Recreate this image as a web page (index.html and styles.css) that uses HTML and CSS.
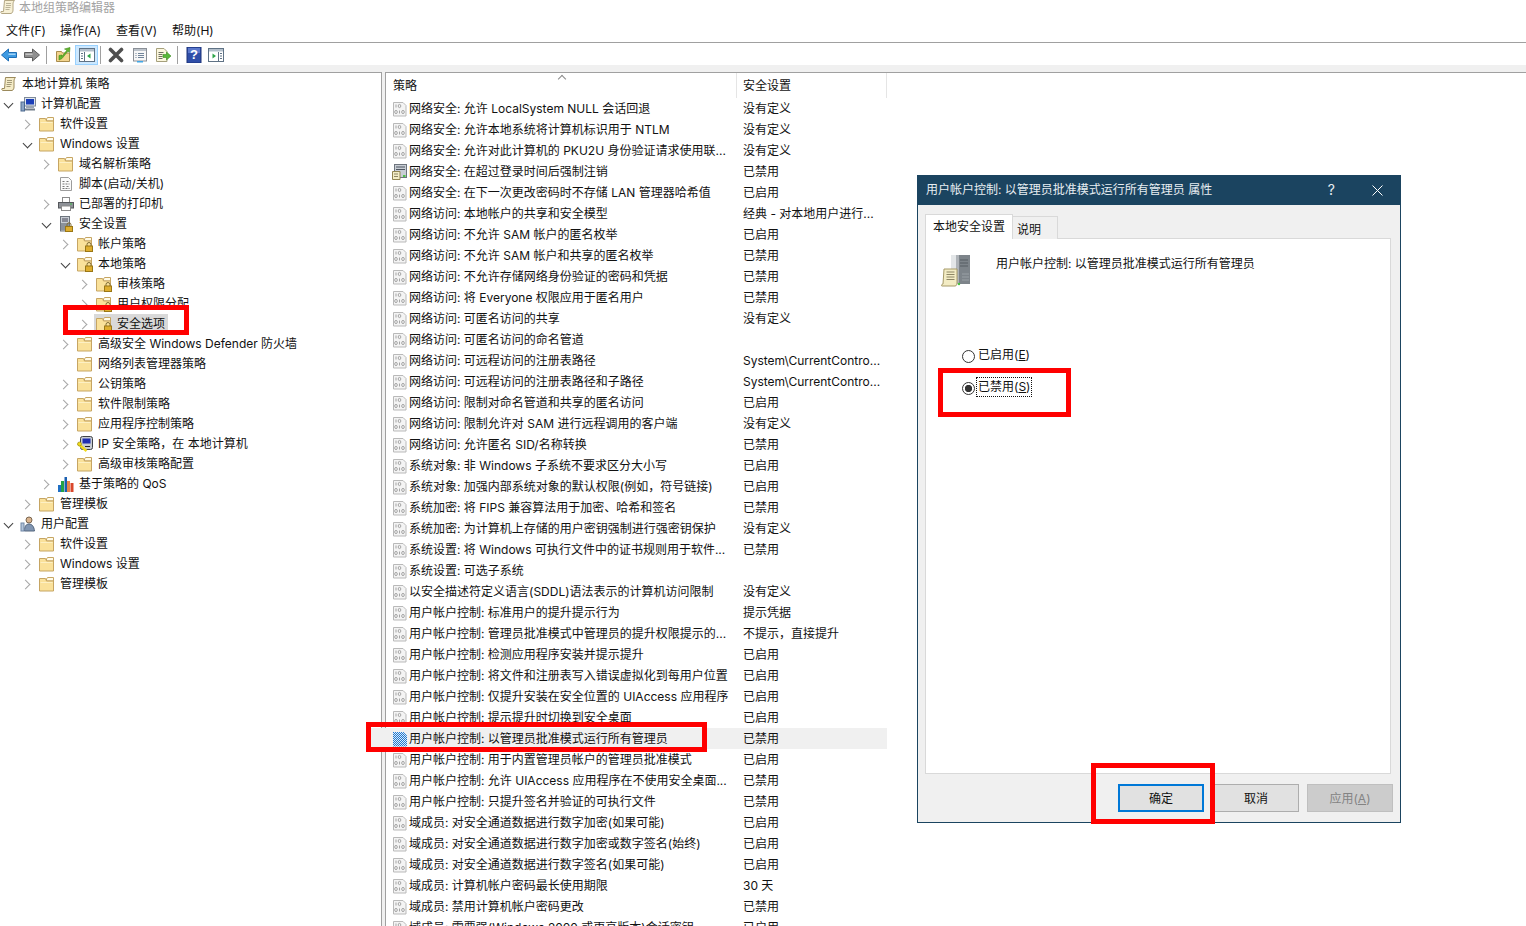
FILE: index.html
```html
<!DOCTYPE html>
<html lang="zh-CN">
<head>
<meta charset="utf-8">
<title>本地组策略编辑器</title>
<link rel="stylesheet" href="styles.css">
</head>
<body>
<svg class="defs" aria-hidden="true">
<defs>
<pattern id="dith" width="2" height="2" patternUnits="userSpaceOnUse"><rect width="2" height="2" fill="#dcebf9"/><rect width="1" height="1" fill="#1f78cf"/><rect x="1" y="1" width="1" height="1" fill="#1f78cf"/></pattern>
<symbol id="scroll" viewBox="0 0 16 16"><path d="M4.500 1.500h10c-1 1-1.500 2-1.500 3.500v6c0 1.500-.5 3-2 3.500H2c-1 0-1.500-1-1-2h2.500z" fill="#f5ecc8" stroke="#9b8a5c"/><path d="M6 4.500h5M6 6.500h5M5.500 8.500h5M5.500 10.500h4" stroke="#a39a78"/></symbol>
<symbol id="folder" viewBox="0 0 16 16"><path d="M7.500 5V3l1-1.500h6V5z" fill="#fffbe9" stroke="#c6a563"/><path d="M.5 2.500h6l1 2.500h7v10H.5z" fill="#fae19a" stroke="#c6a563"/><path d="M1.500 6h12v1h-12z" fill="#fdf0c4"/></symbol>
<symbol id="lock" viewBox="0 0 16 16"><path d="M7.500 5V3l1-1.500h6V5z" fill="#fffbe9" stroke="#c6a563"/><path d="M.5 2.500h6l1 2.500h7v10H.5z" fill="#fae19a" stroke="#c6a563"/><path d="M10 10V8.500a2 2 0 0 1 4 0V10" fill="none" stroke="#7d6a35"/><rect x="8.500" y="10" width="7" height="5.500" fill="#dfae2e" stroke="#9a7716"/></symbol>
<symbol id="comp" viewBox="0 0 16 16"><rect x="4.500" y="1.500" width="11" height="8.500" fill="#dfe6ee" stroke="#7f8a99"/><rect x="6" y="3" width="8" height="5.500" fill="#1c3fb8"/><rect x="6" y="10" width="8" height="2" fill="#9aa5b3"/><path d="M4 13.500h11" stroke="#6f7a88" stroke-width="2"/><rect x="1" y="6" width="3.500" height="9" fill="#8ca4c4" stroke="#4c6a90"/></symbol>
<symbol id="user" viewBox="0 0 16 16"><circle cx="9" cy="4" r="3" fill="#d9b48f" stroke="#7a6650"/><path d="M4.500 15c0-4.500 1.500-7 4.500-7s5 2.500 5.500 7z" fill="#8095b2" stroke="#55677f"/><rect x="1" y="7" width="3" height="8" fill="#b2c4da" stroke="#6f86a5"/></symbol>
<symbol id="script" viewBox="0 0 16 16"><path d="M2.500 1.500h8l3 3v10h-11z" fill="#fafafa" stroke="#9c9c9c"/><path d="M4.500 5.500h2M8.500 5.500h3M4.500 8h7M4.500 10.500h2M8.500 10.500h3M4.500 12.500h7" stroke="#777" stroke-dasharray="2 1"/></symbol>
<symbol id="printer" viewBox="0 0 16 16"><rect x="4.500" y="1.500" width="7" height="5" fill="#fff" stroke="#8a8a8a"/><rect x=".5" y="6.500" width="15" height="5.500" fill="#8d9197" stroke="#55585c"/><rect x="3.500" y="10" width="9" height="4.500" fill="#fff" stroke="#8a8a8a"/><path d="M12 8h2" stroke="#3ec24a"/></symbol>
<symbol id="srvlock" viewBox="0 0 16 16"><rect x="2.500" y=".5" width="9" height="14.500" fill="#c9ced5" stroke="#6d747d"/><path d="M4 3h6M4 5h6" stroke="#445"/><rect x="3" y="7" width="8" height="7" fill="#8b929b"/><path d="M9 10.500V8.800a2 2 0 0 1 4 0v1.700" fill="none" stroke="#7d6a35"/><rect x="7.500" y="10.500" width="7" height="5" fill="#dfae2e" stroke="#9a7716"/></symbol>
<symbol id="ipsec" viewBox="0 0 16 16"><rect x="3.500" y=".5" width="12" height="13" rx="2" fill="#c7ccd2" stroke="#3f4347"/><rect x="5.500" y="2.500" width="8" height="5" fill="#1f2fb0"/><path d="M8 10.500h5" stroke="#222"/><path d="M1 7.500l8.500 7.500" stroke="#f0da1c" stroke-width="2.400"/><circle cx="2.500" cy="8" r="2" fill="#f0da1c" stroke="#8c8010" stroke-width=".6"/></symbol>
<symbol id="qos" viewBox="0 0 16 16"><rect x="0" y="9" width="3" height="7" fill="#1f6fc4"/><rect x="3" y="5" width="3" height="11" fill="#25a244"/><rect x="6.500" y="1" width="2.500" height="15" fill="#1b5fb0"/><rect x="9" y="5" width="3" height="11" fill="#e8834a"/><rect x="12.500" y="7" width="3" height="9" fill="#d9472c"/></symbol>
<symbol id="p" viewBox="0 0 16 16"><path d="M1.500 1.500h9.500l3 3v10.500h-12.500z" fill="#f4f4f4" stroke="#b9b9b9"/><g fill="none" stroke="#a5a5a5"><path d="M4 3.500v3"/><ellipse cx="7.500" cy="5" rx="1.300" ry="1.600"/><ellipse cx="4" cy="11" rx="1.300" ry="1.600"/><path d="M7.500 9.500v3"/><ellipse cx="11" cy="11" rx="1.300" ry="1.600"/></g></symbol>
<symbol id="psel" viewBox="0 0 16 16"><path d="M1 1h10.500l3.500 3.500v11H1z" fill="url(#dith)"/></symbol>
<symbol id="psrv" viewBox="0 0 16 16"><rect x="2.500" y=".5" width="12" height="13" fill="#c9ced5" stroke="#6d747d"/><path d="M4 3h9M4 5.500h9" stroke="#4d5560"/><path d="M.5 7.500h7.500v8H.5z" fill="#f4edc6" stroke="#918552"/><path d="M2 10h4M2 12.500h4" stroke="#8d8664"/><rect x="11" y="11" width="2.500" height="2" fill="#4fc14a"/></symbol>
<symbol id="back" viewBox="0 0 16 16"><path d="M.5 8L7.500 2v3.500h8v5h-8V14z" fill="#3d9ae2" stroke="#1f6eb5" stroke-linejoin="round"/><path d="M7.500 6.500h7v1.500h-7z" fill="#9fd2f7"/></symbol>
<symbol id="fwd" viewBox="0 0 16 16"><path d="M15.500 8L8.500 2v3.500h-8v5h8V14z" fill="#8f8f8f" stroke="#5e5e5e" stroke-linejoin="round"/><path d="M1.500 6.500h7v1.500h-7z" fill="#c4c4c4"/></symbol>
<symbol id="up" viewBox="0 0 16 16"><path d="M1.500 4.500h5l1 1.500h7v8.500h-13z" fill="#f3d48e" stroke="#a98c4d"/><path d="M4 13V8.500l3-.5V9.500L12 3 9.500 2 15 .5l-.5 5-1.500-1.500-6 7.500z" fill="#63b82e" stroke="#3f8a1a" stroke-width=".6"/></symbol>
<symbol id="pane" viewBox="0 0 16 16"><rect x=".5" y="1.500" width="15" height="13" fill="#fff" stroke="#5f7285"/><rect x="1" y="2" width="14" height="2.500" fill="#b3bfcb"/><path d="M5.500 5v9" stroke="#5f7285"/><path d="M2 6.500h2M2 9h2M2 11.500h2" stroke="#5f7285"/><path d="M11.500 6.500v5L8 9z" fill="#2ea54a"/></symbol>
<symbol id="panes" viewBox="0 0 16 16"><rect x=".5" y="1.500" width="15" height="13" fill="#fff" stroke="#5f7285"/><rect x="1" y="2" width="14" height="2.500" fill="#b3bfcb"/><path d="M10.500 5v9" stroke="#5f7285"/><path d="M12 6.500h2M12 9h2M12 11.500h2" stroke="#5f7285"/><path d="M4.500 6.500v5L8 9z" fill="#2ea54a"/></symbol>
<symbol id="x" viewBox="0 0 16 16"><path d="M2.500 2.500l11 11M13.500 2.500l-11 11" stroke="#4f4f4f" stroke-width="3.600" stroke-linecap="round"/></symbol>
<symbol id="props" viewBox="0 0 16 16"><rect x="1.500" y="1.500" width="13" height="12.500" fill="#f7f7f7" stroke="#8a8f96"/><rect x="2" y="2" width="12" height="2" fill="#bcc3cb"/><path d="M3.500 6.500h1M6 6.500h6M3.500 8.500h1M6 8.500h6M3.500 10.500h1M6 10.500h6" stroke="#70849a"/><rect x="5" y="14" width="6" height="1.500" fill="#41a7e6"/></symbol>
<symbol id="export" viewBox="0 0 16 16"><path d="M1.500 1.500h7.500l3 3v10H1.500z" fill="#fbf7de" stroke="#a6a07c"/><path d="M3.500 5.500h5M3.500 7.500h4M3.500 9.500h4M3.500 11.500h4" stroke="#6d6d5f"/><path d="M8 7.500h3.500V5L16 9l-4.500 4v-2.500H8z" fill="#58b83a" stroke="#3d8d24" stroke-width=".6"/></symbol>
<symbol id="help" viewBox="0 0 16 16"><rect x="1" y="0" width="14" height="16" fill="#2f4ea8" stroke="#1d3378"/><rect x="2" y="1" width="12" height="5" fill="#5b78cc"/></symbol>
<symbol id="bigsrv" viewBox="0 0 32 34"><path d="M10 1h19v29H10z" fill="#aeb3b8"/><path d="M10 1h5v29h-5z" fill="#e3e6e8"/><path d="M18 1h11v29H18z" fill="#7d848a"/><path d="M19 6h8M19 9h8M19 12h8" stroke="#565c62"/><path d="M21 20h7M21 23h7M21 26h7" stroke="#9aa0a5"/><circle cx="18" cy="30" r="1.200" fill="#46c13f"/><path d="M3 15h13v14c0 1.500-.5 3-2 3H1c-1 0-1-1.500 1-2z" fill="#f3ecc4" stroke="#a69a68"/><path d="M5.500 18h8M5.500 20.500h8M5.500 23h8M5.500 25.500h8" stroke="#8d8664"/></symbol>
</defs>
</svg>

<div class="app">
  <div class="titlebar"><svg class="title-ic"><use href="#scroll"/></svg><span>本地组策略编辑器</span></div>
  <nav class="menu"><span>文件(F)</span><span>操作(A)</span><span>查看(V)</span><span>帮助(H)</span></nav>
  <div class="toolbar">
    <div class="tg g1"><svg class="ic"><use href="#back"/></svg><svg class="ic"><use href="#fwd"/></svg></div>
    <i class="sep s1"></i>
    <div class="tg g2"><svg class="ic"><use href="#up"/></svg><span class="hot"><svg class="ic"><use href="#pane"/></svg></span></div>
    <i class="sep s2"></i>
    <div class="tg g3"><svg class="ic"><use href="#x"/></svg><svg class="ic"><use href="#props"/></svg><svg class="ic"><use href="#export"/></svg></div>
    <i class="sep s1"></i>
    <div class="tg g4"><span class="helpbtn"><svg class="ic"><use href="#help"/></svg><b>?</b></span><svg class="ic"><use href="#panes"/></svg></div>
  </div>
  <div class="band"></div>
  <div class="panes">
    <aside class="tree">
      <div class="node root"><svg class="ic"><use href="#scroll"/></svg><span>本地计算机 策略</span></div>
      <div class="node l0"><i class="chev open"></i><svg class="ic"><use href="#comp"/></svg><span>计算机配置</span></div>
      <div class="node l1"><i class="chev"></i><svg class="ic"><use href="#folder"/></svg><span>软件设置</span></div>
      <div class="node l1"><i class="chev open"></i><svg class="ic"><use href="#folder"/></svg><span>Windows 设置</span></div>
      <div class="node l2"><i class="chev"></i><svg class="ic"><use href="#folder"/></svg><span>域名解析策略</span></div>
      <div class="node l2"><i class="chev none"></i><svg class="ic"><use href="#script"/></svg><span>脚本(启动/关机)</span></div>
      <div class="node l2"><i class="chev"></i><svg class="ic"><use href="#printer"/></svg><span>已部署的打印机</span></div>
      <div class="node l2"><i class="chev open"></i><svg class="ic"><use href="#srvlock"/></svg><span>安全设置</span></div>
      <div class="node l3"><i class="chev"></i><svg class="ic"><use href="#lock"/></svg><span>帐户策略</span></div>
      <div class="node l3"><i class="chev open"></i><svg class="ic"><use href="#lock"/></svg><span>本地策略</span></div>
      <div class="node l4"><i class="chev"></i><svg class="ic"><use href="#lock"/></svg><span>审核策略</span></div>
      <div class="node l4"><i class="chev"></i><svg class="ic"><use href="#lock"/></svg><span>用户权限分配</span></div>
      <div class="node l4"><i class="chev"></i><span class="cur"><svg class="ic"><use href="#lock"/></svg><span>安全选项</span></span></div>
      <div class="node l3"><i class="chev"></i><svg class="ic"><use href="#folder"/></svg><span>高级安全 Windows Defender 防火墙</span></div>
      <div class="node l3"><i class="chev none"></i><svg class="ic"><use href="#folder"/></svg><span>网络列表管理器策略</span></div>
      <div class="node l3"><i class="chev"></i><svg class="ic"><use href="#folder"/></svg><span>公钥策略</span></div>
      <div class="node l3"><i class="chev"></i><svg class="ic"><use href="#folder"/></svg><span>软件限制策略</span></div>
      <div class="node l3"><i class="chev"></i><svg class="ic"><use href="#folder"/></svg><span>应用程序控制策略</span></div>
      <div class="node l3"><i class="chev"></i><svg class="ic"><use href="#ipsec"/></svg><span>IP 安全策略，在 本地计算机</span></div>
      <div class="node l3"><i class="chev"></i><svg class="ic"><use href="#folder"/></svg><span>高级审核策略配置</span></div>
      <div class="node l2"><i class="chev"></i><svg class="ic"><use href="#qos"/></svg><span>基于策略的 QoS</span></div>
      <div class="node l1"><i class="chev"></i><svg class="ic"><use href="#folder"/></svg><span>管理模板</span></div>
      <div class="node l0"><i class="chev open"></i><svg class="ic"><use href="#user"/></svg><span>用户配置</span></div>
      <div class="node l1"><i class="chev"></i><svg class="ic"><use href="#folder"/></svg><span>软件设置</span></div>
      <div class="node l1"><i class="chev"></i><svg class="ic"><use href="#folder"/></svg><span>Windows 设置</span></div>
      <div class="node l1"><i class="chev"></i><svg class="ic"><use href="#folder"/></svg><span>管理模板</span></div>
    </aside>
    <div class="split"></div>
    <main class="list">
      <div class="head"><span class="hname">策略<i class="sort"></i></span><span class="hval">安全设置</span></div>
      <div class="row"><span class="name"><svg class="ic"><use href="#p"/></svg><span>网络安全: 允许 LocalSystem NULL 会话回退</span></span><span class="val">没有定义</span></div>
      <div class="row"><span class="name"><svg class="ic"><use href="#p"/></svg><span>网络安全: 允许本地系统将计算机标识用于 NTLM</span></span><span class="val">没有定义</span></div>
      <div class="row"><span class="name"><svg class="ic"><use href="#p"/></svg><span>网络安全: 允许对此计算机的 PKU2U 身份验证请求使用联...</span></span><span class="val">没有定义</span></div>
      <div class="row"><span class="name"><svg class="ic"><use href="#psrv"/></svg><span>网络安全: 在超过登录时间后强制注销</span></span><span class="val">已禁用</span></div>
      <div class="row"><span class="name"><svg class="ic"><use href="#p"/></svg><span>网络安全: 在下一次更改密码时不存储 LAN 管理器哈希值</span></span><span class="val">已启用</span></div>
      <div class="row"><span class="name"><svg class="ic"><use href="#p"/></svg><span>网络访问: 本地帐户的共享和安全模型</span></span><span class="val">经典 - 对本地用户进行...</span></div>
      <div class="row"><span class="name"><svg class="ic"><use href="#p"/></svg><span>网络访问: 不允许 SAM 帐户的匿名枚举</span></span><span class="val">已启用</span></div>
      <div class="row"><span class="name"><svg class="ic"><use href="#p"/></svg><span>网络访问: 不允许 SAM 帐户和共享的匿名枚举</span></span><span class="val">已禁用</span></div>
      <div class="row"><span class="name"><svg class="ic"><use href="#p"/></svg><span>网络访问: 不允许存储网络身份验证的密码和凭据</span></span><span class="val">已禁用</span></div>
      <div class="row"><span class="name"><svg class="ic"><use href="#p"/></svg><span>网络访问: 将 Everyone 权限应用于匿名用户</span></span><span class="val">已禁用</span></div>
      <div class="row"><span class="name"><svg class="ic"><use href="#p"/></svg><span>网络访问: 可匿名访问的共享</span></span><span class="val">没有定义</span></div>
      <div class="row"><span class="name"><svg class="ic"><use href="#p"/></svg><span>网络访问: 可匿名访问的命名管道</span></span><span class="val"></span></div>
      <div class="row"><span class="name"><svg class="ic"><use href="#p"/></svg><span>网络访问: 可远程访问的注册表路径</span></span><span class="val">System\CurrentContro...</span></div>
      <div class="row"><span class="name"><svg class="ic"><use href="#p"/></svg><span>网络访问: 可远程访问的注册表路径和子路径</span></span><span class="val">System\CurrentContro...</span></div>
      <div class="row"><span class="name"><svg class="ic"><use href="#p"/></svg><span>网络访问: 限制对命名管道和共享的匿名访问</span></span><span class="val">已启用</span></div>
      <div class="row"><span class="name"><svg class="ic"><use href="#p"/></svg><span>网络访问: 限制允许对 SAM 进行远程调用的客户端</span></span><span class="val">没有定义</span></div>
      <div class="row"><span class="name"><svg class="ic"><use href="#p"/></svg><span>网络访问: 允许匿名 SID/名称转换</span></span><span class="val">已禁用</span></div>
      <div class="row"><span class="name"><svg class="ic"><use href="#p"/></svg><span>系统对象: 非 Windows 子系统不要求区分大小写</span></span><span class="val">已启用</span></div>
      <div class="row"><span class="name"><svg class="ic"><use href="#p"/></svg><span>系统对象: 加强内部系统对象的默认权限(例如，符号链接)</span></span><span class="val">已启用</span></div>
      <div class="row"><span class="name"><svg class="ic"><use href="#p"/></svg><span>系统加密: 将 FIPS 兼容算法用于加密、哈希和签名</span></span><span class="val">已禁用</span></div>
      <div class="row"><span class="name"><svg class="ic"><use href="#p"/></svg><span>系统加密: 为计算机上存储的用户密钥强制进行强密钥保护</span></span><span class="val">没有定义</span></div>
      <div class="row"><span class="name"><svg class="ic"><use href="#p"/></svg><span>系统设置: 将 Windows 可执行文件中的证书规则用于软件...</span></span><span class="val">已禁用</span></div>
      <div class="row"><span class="name"><svg class="ic"><use href="#p"/></svg><span>系统设置: 可选子系统</span></span><span class="val"></span></div>
      <div class="row"><span class="name"><svg class="ic"><use href="#p"/></svg><span>以安全描述符定义语言(SDDL)语法表示的计算机访问限制</span></span><span class="val">没有定义</span></div>
      <div class="row"><span class="name"><svg class="ic"><use href="#p"/></svg><span>用户帐户控制: 标准用户的提升提示行为</span></span><span class="val">提示凭据</span></div>
      <div class="row"><span class="name"><svg class="ic"><use href="#p"/></svg><span>用户帐户控制: 管理员批准模式中管理员的提升权限提示的...</span></span><span class="val">不提示，直接提升</span></div>
      <div class="row"><span class="name"><svg class="ic"><use href="#p"/></svg><span>用户帐户控制: 检测应用程序安装并提示提升</span></span><span class="val">已启用</span></div>
      <div class="row"><span class="name"><svg class="ic"><use href="#p"/></svg><span>用户帐户控制: 将文件和注册表写入错误虚拟化到每用户位置</span></span><span class="val">已启用</span></div>
      <div class="row"><span class="name"><svg class="ic"><use href="#p"/></svg><span>用户帐户控制: 仅提升安装在安全位置的 UIAccess 应用程序</span></span><span class="val">已启用</span></div>
      <div class="row"><span class="name"><svg class="ic"><use href="#p"/></svg><span>用户帐户控制: 提示提升时切换到安全桌面</span></span><span class="val">已启用</span></div>
      <div class="row selected"><span class="name"><svg class="ic"><use href="#psel"/></svg><span>用户帐户控制: 以管理员批准模式运行所有管理员</span></span><span class="val">已禁用</span></div>
      <div class="row"><span class="name"><svg class="ic"><use href="#p"/></svg><span>用户帐户控制: 用于内置管理员帐户的管理员批准模式</span></span><span class="val">已启用</span></div>
      <div class="row"><span class="name"><svg class="ic"><use href="#p"/></svg><span>用户帐户控制: 允许 UIAccess 应用程序在不使用安全桌面...</span></span><span class="val">已禁用</span></div>
      <div class="row"><span class="name"><svg class="ic"><use href="#p"/></svg><span>用户帐户控制: 只提升签名并验证的可执行文件</span></span><span class="val">已禁用</span></div>
      <div class="row"><span class="name"><svg class="ic"><use href="#p"/></svg><span>域成员: 对安全通道数据进行数字加密(如果可能)</span></span><span class="val">已启用</span></div>
      <div class="row"><span class="name"><svg class="ic"><use href="#p"/></svg><span>域成员: 对安全通道数据进行数字加密或数字签名(始终)</span></span><span class="val">已启用</span></div>
      <div class="row"><span class="name"><svg class="ic"><use href="#p"/></svg><span>域成员: 对安全通道数据进行数字签名(如果可能)</span></span><span class="val">已启用</span></div>
      <div class="row"><span class="name"><svg class="ic"><use href="#p"/></svg><span>域成员: 计算机帐户密码最长使用期限</span></span><span class="val">30 天</span></div>
      <div class="row"><span class="name"><svg class="ic"><use href="#p"/></svg><span>域成员: 禁用计算机帐户密码更改</span></span><span class="val">已禁用</span></div>
      <div class="row"><span class="name"><svg class="ic"><use href="#p"/></svg><span>域成员: 需要强(Windows 2000 或更高版本)会话密钥</span></span><span class="val">已启用</span></div>
    </main>
  </div>
</div>

<section class="dialog">
  <header class="dlg-title"><span class="dlg-name">用户帐户控制: 以管理员批准模式运行所有管理员 属性</span><span class="dlg-help">?</span><svg class="dlg-close" viewBox="0 0 11 11"><path d="M.5.500l10 10M10.500.500l-10 10"/></svg></header>
  <div class="dlg-body">
    <div class="tabs"><span class="tab active">本地安全设置</span><span class="tab">说明</span></div>
    <div class="panel">
      <div class="policy-head"><svg class="bigicon"><use href="#bigsrv"/></svg><span>用户帐户控制: 以管理员批准模式运行所有管理员</span></div>
      <div class="radios">
        <div class="radio"><i class="dot"></i><span>已启用(<u>E</u>)</span></div>
        <div class="radio checked"><i class="dot"></i><span class="focus">已禁用(<u>S</u>)</span></div>
      </div>
    </div>
    <div class="buttons"><span class="btn primary">确定</span><span class="btn">取消</span><span class="btn off">应用(<u>A</u>)</span></div>
  </div>
</section>

<div class="mark m-tree"></div>
<div class="mark m-row"></div>
<div class="mark m-radio"></div>
<div class="mark m-ok"></div>
</body>
</html>
```
FILE: styles.css
```css
* { box-sizing: border-box; }
html, body { margin: 0; height: 100%; }
body {
  position: relative;
  width: 1526px;
  height: 926px;
  overflow: hidden;
  background: #fff;
  color: #111;
  font: 12px/20px Inter, "Noto Sans CJK SC", sans-serif;
}
.defs { position: absolute; width: 0; height: 0; }
.ic { width: 16px; height: 16px; flex: none; display: block; }

.app { display: flex; flex-direction: column; height: 926px; }

.titlebar { height: 21px; display: flex; color: #a3a3a3; line-height: 15px; padding-left: 19px; overflow: hidden; }
.title-ic { width: 16px; height: 16px; margin: -1px 3px 0 -19px; flex: none; opacity: .75; }

.menu { height: 22px; display: flex; border-bottom: 1px solid #a0a0a0; padding-left: 6px; line-height: 20px; }
.menu span { width: 56px; }
.menu span:first-child { width: 54px; }

.toolbar { height: 22px; padding-top: 1px; display: flex; align-items: center; background: #fff; flex: none; }
.tg { display: flex; align-items: center; }
.g1 { padding-left: 1px; gap: 7px; }
.g2 { gap: 4px; }
.g3 { gap: 7.5px; }
.g4 { gap: 6px; }
.sep { width: 1px; height: 18px; background: #a0a0a0; flex: none; }
.s1 { margin: 0 8px 0 6px; }
.s2 { margin: 0 7px 0 2px; }
.hot { width: 23px; height: 20px; display: flex; align-items: center; justify-content: center; background: #cce8ff; border: 1px solid #99d1ff; }
.helpbtn { position: relative; width: 16px; height: 16px; display: block; }
.helpbtn b { position: absolute; inset: 0; text-align: center; color: #fff; font: bold 13px/16px "Liberation Sans", sans-serif; }

.band { height: 7px; background: #f0f0f0; flex: none; }

.panes { flex: 1; display: flex; min-height: 0; background: #f0f0f0; }
.tree { width: 382px; flex: none; background: #fff; padding-top: 1px; border-top: 1px solid #a0a0a0; border-right: 1px solid #a0a0a0; }
.split { width: 3px; flex: none; }
.list { flex: 1; min-width: 0; background: #fff; border-top: 1px solid #a0a0a0; border-left: 1px solid #a0a0a0; }

.node { height: 20px; display: flex; align-items: center; padding-left: 1px; white-space: nowrap; }
.node > svg { margin-right: 5px; }
.root { padding-left: 1px; }
.l1 { padding-left: 20px; }
.l2 { padding-left: 39px; }
.l3 { padding-left: 58px; }
.l4 { padding-left: 77px; }
.chev { width: 19px; height: 20px; flex: none; position: relative; }
.chev::before {
  content: ""; position: absolute; left: 2px; top: 7px;
  width: 6px; height: 6px;
  border-top: 1.6px solid #a6a6a6; border-right: 1.6px solid #a6a6a6;
  transform: rotate(45deg);
}
.chev.open::before { left: 4px; top: 5.500px; border-color: #404040; transform: rotate(135deg); }
.chev.none::before { display: none; }
.cur { display: flex; align-items: center; gap: 5px; background: #d9d9d9; height: 20px; padding-right: 3px; margin-left: -2px; padding-left: 2px; }

.head { display: grid; grid-template-columns: 350px 151px; height: 25px; line-height: 25px; }
.hname { padding-left: 7px; position: relative; }
.hval { padding-left: 6px; border-left: 1px solid #e5e5e5; border-right: 1px solid #e5e5e5; }
.sort { position: absolute; left: 173px; top: 3px; width: 6px; height: 6px; border-top: 1px solid #8a8a8a; border-left: 1px solid #8a8a8a; transform: rotate(45deg); }

.row { display: grid; grid-template-columns: 350px 150px; height: 21px; line-height: 21px; white-space: nowrap; }
.name { display: flex; align-items: center; gap: 1px; padding-left: 6px; overflow: hidden; }
.val { padding-left: 7px; overflow: hidden; }
.selected { position: relative; z-index: 1; margin-left: -15px; width: 516px; grid-template-columns: 365px 151px; background: #f0f0f0; }
.selected .name { padding-left: 21px; }

.dialog {
  position: absolute; left: 917px; top: 175px; width: 484px; height: 648px;
  display: flex; flex-direction: column;
  background: #f0f0f0; border: 1px solid #1b4460;
}
.dlg-title { height: 29px; flex: none; display: flex; align-items: center; background: #1b4460; color: #e8eef2; padding: 0 0 2px 8px; }
.dlg-name { flex: 1; }
.dlg-help { margin-right: 37px; font-size: 14px; }
.dlg-close { width: 11px; height: 11px; margin: 2px 17px 0 0; stroke: #fff; fill: none; }
.dlg-body { flex: 1; display: flex; flex-direction: column; padding: 9px 9px 10px 7px; min-height: 0; }
.tabs { display: flex; align-items: flex-end; height: 25px; flex: none; position: relative; z-index: 1; margin-bottom: -1px; }
.tab { width: 45px; height: 23px; line-height: 25px; padding-left: 4px; background: #f0f0f0; border: 1px solid #d9d9d9; border-left: 0; border-bottom: 0; }
.tab.active { width: 88px; height: 25px; line-height: 23px; padding-left: 7px; background: #fff; border-left: 1px solid #d9d9d9; }
.panel { flex: 1; min-height: 0; background: #fff; border: 1px solid #d9d9d9; padding: 15px 0 0 15px; }
.policy-head { display: flex; align-items: flex-start; gap: 23px; height: 34px; }
.bigicon { width: 32px; height: 34px; flex: none; }
.radios { margin: 58px 0 0 21px; display: flex; flex-direction: column; gap: 12px; }
.radio { height: 20px; display: flex; align-items: center; gap: 3px; }
.dot { width: 13px; height: 13px; flex: none; border: 1px solid #333; border-radius: 50%; background: #fff; margin-top: 1px; }
.checked .dot { background: radial-gradient(circle, #333 0 3.400px, #fff 3.900px); }
.focus { outline: 1px dotted #111; line-height: 18px; padding: 0 1px; margin-left: -1px; margin-top: -2px; }
.radio > span:not(.focus) { margin-top: -2px; }
.buttons { display: flex; justify-content: flex-end; gap: 8px; height: 28px; margin-top: 10px; flex: none; margin-right: -2px; }
.btn { width: 86px; height: 28px; line-height: 27px; text-align: center; background: #e1e1e1; border: 1px solid #adadad; }
.btn.primary { border: 2px solid #0078d7; line-height: 25px; margin-right: 1px; }
.btn.off { background: #ccc; border-color: #bfbfbf; color: #838383; }

.mark { position: absolute; border: 5px solid #f00; z-index: 5; }
.m-tree { left: 63px; top: 305px; width: 126px; height: 30px; }
.m-row { left: 366px; top: 722px; width: 341px; height: 30px; }
.m-radio { left: 938px; top: 368px; width: 133px; height: 49px; }
.m-ok { left: 1091px; top: 763px; width: 124px; height: 61px; }
```
